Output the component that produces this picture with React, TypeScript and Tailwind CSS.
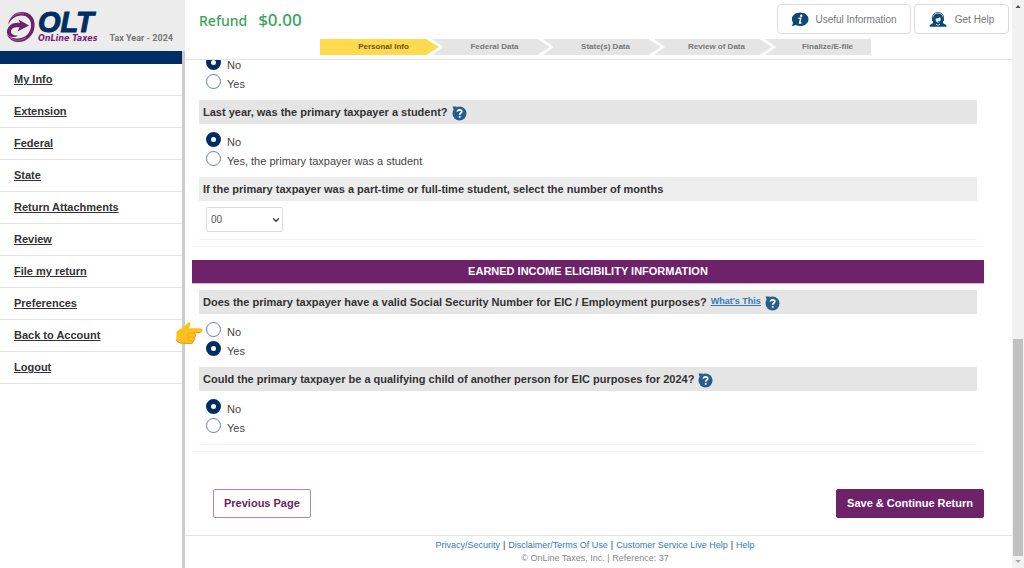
import type { ReactNode } from 'react';
import { ChevronDown } from 'lucide-react';

const NAV_ITEMS = [
  'My Info',
  'Extension',
  'Federal',
  'State',
  'Return Attachments',
  'Review',
  'File my return',
  'Preferences',
  'Back to Account',
  'Logout',
];

const STEPS = ['Personal Info', 'Federal Data', 'State(s) Data', 'Review of Data', 'Finalize/E-file'];

// ========================================
// Icons
// ========================================

function LogoSwirl() {
  return (
    <svg viewBox="0 0 30 34" className="w-[30px] h-[34px] shrink-0" aria-hidden="true">
      <path
        d="M2 15C3.500 6 10 1.500 17 2C25 2.500 29.500 9 28.500 17C27.500 26 20 32.500 11.500 32C6 31.500 2.500 28.500 1 24.500C4 27.500 8 29 12.500 28.500C19.500 28 24.500 23 25 16.500C25.500 9.500 21.500 5.500 15.500 5.500C9.500 5.500 4.500 9.500 2 15Z"
        fill="#6d226a"
      />
      <path
        d="M1 21C2 15.500 7 12 14 13L12.500 9.500L23 15.500L11.500 21.500L13.500 17.500C8.500 16.500 5.500 18 5 21C4.500 24 8 26 12 25.500C8 28.500 0 27 1 21Z"
        fill="#6d226a"
      />
      <path d="M6 7.500C9 4 13.500 2.800 18 3.500" fill="none" stroke="#a878a8" strokeWidth="0.800" />
      <path d="M4 27.500C8 31 15 31.500 20 27.500" fill="none" stroke="#a878a8" strokeWidth="0.800" />
    </svg>
  );
}

function InfoBubbleIcon() {
  return (
    <svg viewBox="0 0 18 15" className="w-[18px] h-[15px] shrink-0" aria-hidden="true">
      <path
        d="M9.200 0.500C14 0.500 17.500 3.400 17.500 7.200C17.500 11 14 14 9.200 14C7.500 14 6 13.700 4.700 13C3.500 13.700 2 14.100 0.500 14.100C1.500 13.200 2 12 1.900 10.600C1.200 9.600 0.900 8.500 0.900 7.200C0.900 3.400 4.400 0.500 9.200 0.500Z"
        fill="#0d4775"
      />
      <circle cx="10.200" cy="3.700" r="1.200" fill="#fff" />
      <path d="M7.500 6.300H9.700L8.600 11H10.500" fill="none" stroke="#fff" strokeWidth="1.400" />
    </svg>
  );
}

function AgentIcon() {
  return (
    <svg viewBox="0 0 18 15" className="w-[18px] h-[15px] shrink-0" aria-hidden="true">
      <path d="M3.300 6C3.300 2.300 5.700 0.500 9 0.500C12.300 0.500 14.700 2.300 14.700 6" fill="none" stroke="#0d4775" strokeWidth="0.800" />
      <path
        d="M4.200 5.500C4.200 3 6.300 1.600 9 1.600C11.700 1.600 13.800 3 13.800 5.500L14.900 5.700V9L13.900 9.200L14.200 11.300L16 12.200C17 12.700 17.500 13.500 17.500 14.700H0.500C0.500 13.500 1 12.700 2 12.200L3.800 11.300L4.100 9.200L3.100 9V5.700Z"
        fill="#0d4775"
      />
      <path d="M6.500 6.700C8.200 6.700 9.800 6.200 10.800 5.300L11.700 6.600C11.700 9 10.700 10.600 9.200 10.600C7.700 10.600 6.500 9 6.500 6.700Z" fill="#fff" />
      <path d="M8.800 9.300H11.500L13.500 8" fill="none" stroke="#0d4775" strokeWidth="0.800" />
      <path d="M7 12.200L9 13.300L11 12.200" fill="none" stroke="#fff" strokeWidth="0.700" />
    </svg>
  );
}

function HelpIcon() {
  return (
    <button type="button" aria-label="More information" className="shrink-0 mt-0.5">
      <svg viewBox="0 0 15 15" className="block w-[15px] h-[15px]" aria-hidden="true">
        <path d="M0.500 0.500H5L2 4.500Z" fill="#255d8f" />
        <circle cx="7.500" cy="7.500" r="7" fill="#255d8f" />
        <path
          d="M5.300 5.700C5.500 4.300 6.300 3.800 7.600 3.800C9 3.800 9.800 4.500 9.800 5.500C9.800 7 7.700 7 7.700 8.800"
          fill="none"
          stroke="#fff"
          strokeWidth="1.700"
        />
        <rect x="6.800" y="9.900" width="1.800" height="1.800" fill="#fff" />
      </svg>
    </button>
  );
}

function PointingHand() {
  return (
    <svg viewBox="0 0 28 26" className="absolute -left-6 top-0 w-7 h-[26px] z-10" aria-hidden="true">
      <path
        d="M1.500 10C3 7.500 7 6.500 10 4C11.500 2.500 13.500 0 15 0.700C16.500 1.800 15 4.500 13.500 6.200L25.500 6.200C28 6.500 28 10.200 25.500 10.400L18.500 11C21 11.700 21.300 14.500 19.300 15.300C20.500 16.500 19.800 18.600 18 18.900C18.700 20.300 17.500 21.600 15.800 21.500L6 21C3 20.500 1.500 19.500 1.200 17.500Z"
        fill="#fcc21b"
      />
      <path
        d="M1.200 17.500C2 20 4 20.800 7 21.200L15.800 21.500C17.500 21.600 18.700 20.300 18 18.900C19.800 18.600 20.500 16.500 19.300 15.300C21.300 14.500 21 11.700 18.500 11L25.500 10.400"
        fill="none"
        stroke="#d9941a"
        strokeWidth="1"
      />
      <path
        d="M13.500 11H18.500M13.500 15.200H19M13 18.700H18M13.500 11C12.300 12.500 12.300 13.800 13.300 15.200C12.300 16.500 12.300 17.500 13 18.700"
        fill="none"
        stroke="#f0a51a"
        strokeWidth="0.800"
      />
    </svg>
  );
}

// ========================================
// Form parts
// ========================================

interface QuestionProps {
  children: ReactNode;
}

function Question({ children }: QuestionProps) {
  return (
    <div className="flex items-center gap-1 h-6 px-1 bg-[#e5e5e5] text-[11px] font-bold text-[#333]">
      {children}
    </div>
  );
}

interface RadioGroupProps {
  name: string;
  label: string;
  options: string[];
  selected: string;
  pointer?: boolean;
}

function RadioGroup({ name, label, options, selected, pointer }: RadioGroupProps) {
  return (
    <div role="radiogroup" aria-label={label} className="relative pl-[7px] mt-2 mb-[7px]">
      {pointer && <PointingHand />}
      {options.map((option) => (
        <label key={option} className="flex items-start gap-1.5 h-[19px] text-[11px] text-[#444]">
          <input
            type="radio"
            name={name}
            defaultChecked={option === selected}
            className="appearance-none w-[15px] h-[15px] shrink-0 rounded-full bg-white border border-[#5f80ab] checked:border-5 checked:border-[#002d62]"
          />
          <span className="leading-5">{option}</span>
        </label>
      ))}
    </div>
  );
}

function StepBar() {
  return (
    <ol className="flex w-[551px] h-4 text-[8px] font-bold text-[#777]">
      {STEPS.map((step, i) => (
        <li
          key={step}
          className={
            i === 0
              ? 'relative flex items-center justify-center w-[107px] pl-5 bg-[#ffd94f] text-[#6b5413]'
              : 'relative flex items-center justify-center flex-1 pl-6 bg-[#e5e5e5]'
          }
        >
          {i > 0 && (
            <svg viewBox="0 0 16 16" className="absolute left-0 top-0 w-4 h-4" aria-hidden="true">
              <path d="M0 0H5L16 8L5 16H0Z" fill="#fff" />
              <path d="M0 0.500L12 8L0 15.500Z" fill={i === 1 ? '#ffd94f' : '#e5e5e5'} />
            </svg>
          )}
          {step}
        </li>
      ))}
    </ol>
  );
}

// ========================================
// Page
// ========================================

function Sidebar() {
  return (
    <aside className="flex flex-col w-[185px] shrink-0">
      <div className="flex items-start h-[51px] pl-1.5 bg-[#ececec]">
        <div className="pt-2.5">
          <LogoSwirl />
        </div>
        <div className="pl-0.5 pt-1.5 text-[#002d62]">
          <div className="text-[29px] leading-8 h-[28px] font-bold italic [-webkit-text-stroke:1px_#002d62]">OLT</div>
          <div className="font-['DejaVu_Sans'] text-[8px] leading-[9px] font-bold italic text-[#7b1f7a] whitespace-nowrap">
            OnLine Taxes
          </div>
        </div>
        <div className="pl-3 pt-8 font-['Roboto'] text-[9px] leading-3 font-bold text-[#777] whitespace-nowrap">
          Tax Year - 2024
        </div>
      </div>
      <nav className="flex-1 border-r-3 border-[#ccc] bg-white">
        <div className="h-[13px] bg-[#002d62]" />
        <ul>
          {NAV_ITEMS.map((item) => (
            <li key={item} className="flex items-center h-8 pl-3.5 border-b border-[#e3e3e3]">
              <a href="#" className="text-[11px] font-bold text-[#333] underline">
                {item}
              </a>
            </li>
          ))}
        </ul>
      </nav>
    </aside>
  );
}

function Header() {
  return (
    <header className="relative z-20 h-[60px] bg-white border-b border-[#e3e3e3]">
      <div className="flex items-start justify-between h-[39px] pl-3.5 pr-[3px] pt-1">
        <div className="flex items-baseline gap-[11px] pt-1 font-['Noto_Sans'] font-medium text-[#3aa35c]">
          <span className="text-[14px] leading-6">Refund</span>
          <span className="text-[17px] leading-6">$0.00</span>
        </div>
        <div className="flex gap-[3px] text-[10px] text-[#777]">
          <button type="button" className="flex items-center justify-center gap-1.5 w-[134px] h-[30px] rounded-sm border border-[#ddd] bg-white">
            <InfoBubbleIcon />
            Useful Information
          </button>
          <button type="button" className="flex items-center justify-center gap-2 w-[95px] h-[30px] rounded-sm border border-[#ddd] bg-white">
            <AgentIcon />
            Get Help
          </button>
        </div>
      </div>
      <div className="flex justify-center pr-1.5">
        <StepBar />
      </div>
    </header>
  );
}

function Scrollbar() {
  return (
    <div className="flex flex-col items-center w-3 shrink-0 bg-[#f1f1f1]" aria-hidden="true">
      <svg viewBox="0 0 12 12" className="w-3 h-3">
        <path d="M3.500 8L6 5L8.500 8Z" fill="#505050" />
      </svg>
      <div className="flex-1" />
      <div className="w-2.5 h-[217px] bg-[#c1c1c1]" />
      <svg viewBox="0 0 12 12" className="w-3 h-3">
        <path d="M3.500 4L6 7L8.500 4Z" fill="#a3a3a3" />
      </svg>
    </div>
  );
}

export default function App() {
  return (
    <div className="flex min-h-screen bg-white font-['Liberation_Sans',sans-serif]">
      <Sidebar />

      <div className="flex flex-col flex-1 min-w-0">
        <Header />

        <main className="pl-[7px] pr-7">
          {/* Personal information, scrolled under the header */}
          <section className="-mt-[13px] px-[7px] pb-1.5 border-b border-[#f4f4f4]">
            <div className="border-b border-[#f4f4f4]">
              <RadioGroup name="dependent" label="Previous question" options={['No', 'Yes']} selected="No" />

              <Question>
                Last year, was the primary taxpayer a student?
                <HelpIcon />
              </Question>
              <RadioGroup
                name="student"
                label="Last year, was the primary taxpayer a student?"
                options={['No', 'Yes, the primary taxpayer was a student']}
                selected="No"
              />

              <label
                htmlFor="months"
                className="flex items-center h-6 px-1 bg-[#ededed] text-[11px] font-bold text-[#333]"
              >
                If the primary taxpayer was a part-time or full-time student, select the number of months
              </label>
              <div className="relative w-[77px] ml-[7px] mt-1.5 mb-[7px]">
                <select
                  id="months"
                  defaultValue="00"
                  className="appearance-none block w-full h-[25px] pl-1 rounded-xs border border-[#ddd] bg-white text-[10px] text-[#555]"
                >
                  <option>00</option>
                  <option>01</option>
                  <option>02</option>
                  <option>03</option>
                </select>
                <ChevronDown className="absolute right-0.5 top-2 w-2.5 h-2.5 text-[#333] pointer-events-none" strokeWidth={3} />
              </div>
            </div>
          </section>

          {/* Earned income */}
          <section className="mt-[13px] border-b border-[#f4f4f4] pb-1.5">
            <h2 className="flex items-center justify-center h-6 bg-[#6d226a] border-b border-[#d9b3d8] text-[11px] font-bold text-white">
              EARNED INCOME ELIGIBILITY INFORMATION
            </h2>
            <div className="mx-[7px] mt-1.5 border-b border-[#f4f4f4]">
              <Question>
                Does the primary taxpayer have a valid Social Security Number for EIC / Employment purposes?
                <a href="#" className="text-[9px] text-[#337ab7] underline">
                  What's This
                </a>
                <HelpIcon />
              </Question>
              <RadioGroup name="ssn" label="Valid Social Security Number" options={['No', 'Yes']} selected="Yes" pointer />

              <Question>
                Could the primary taxpayer be a qualifying child of another person for EIC purposes for 2024?
                <HelpIcon />
              </Question>
              <RadioGroup name="child" label="Qualifying child" options={['No', 'Yes']} selected="No" />
            </div>
          </section>

          <div className="flex justify-between mt-[37px] mb-[17px] pl-[21px] text-[11px] font-bold">
            <button type="button" className="h-[29px] px-2.5 rounded-xs border border-[#b583b3] bg-white text-[#6d226a]">
              Previous Page
            </button>
            <button type="button" className="h-[29px] px-2.5 rounded-xs border border-[#6d226a] bg-[#6d226a] text-white">
              Save &amp; Continue Return
            </button>
          </div>
        </main>

        <footer className="border-t border-[#e3e3e3] pt-[3px] pr-[7px] text-center text-[9px] leading-[13px] text-[#333]">
          <div className="flex justify-center gap-[3px]">
            <a href="#" className="text-[#337ab7]">Privacy/Security</a>|
            <a href="#" className="text-[#337ab7]">Disclaimer/Terms Of Use</a>|
            <a href="#" className="text-[#337ab7]">Customer Service Live Help</a>|
            <a href="#" className="text-[#337ab7]">Help</a>
          </div>
          <p className="text-[#888]">© OnLine Taxes, Inc. | Reference: 37</p>
        </footer>
      </div>

      <Scrollbar />
    </div>
  );
}
